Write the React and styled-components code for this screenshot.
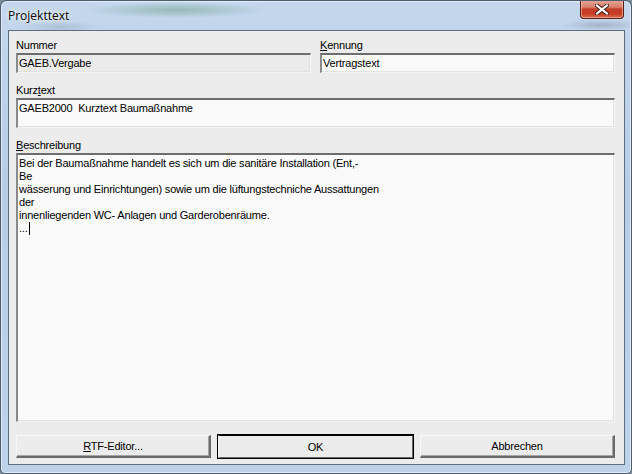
import React from 'react';
import styled, {createGlobalStyle} from 'styled-components';

const GlobalStyle = createGlobalStyle`
  html, body {
    margin: 0;
    padding: 0;
    background: #7a8a99;
  }
  #root {
    width: 632px;
    height: 474px;
  }
`;

const Window = styled.div`
  width: 632px;
  height: 474px;
  box-sizing: border-box;
  display: flex;
  flex-direction: column;
  border: 1px solid #4d5d6e;
  border-radius: 7px 7px 5px 5px;
  overflow: hidden;
  background:
    radial-gradient(ellipse 90px 8px at 175px 9px, rgba(96, 150, 120, 0.45), transparent),
    radial-gradient(ellipse 40px 6px at 600px 24px, rgba(110, 120, 140, 0.35), transparent),
    radial-gradient(ellipse 40px 6px at 60px 26px, rgba(120, 140, 170, 0.3), transparent),
    linear-gradient(180deg, #c4d7ec 0%, #b7cde6 40%, #bed3ea 100%);
  box-shadow: inset 0 0 0 1px rgba(255, 255, 255, 0.55);
`;

const TitleBar = styled.div`
  height: 29px;
  flex: none;
  display: flex;
  align-items: flex-start;
  justify-content: space-between;
  padding: 0 7px 0 7px;
`;

const Title = styled.span`
  margin-top: 8px;
  font-family: "Open Sans", "Noto Sans", sans-serif;
  font-size: 12px;
  line-height: 14px;
  color: #000;
  text-shadow: 0 0 6px rgba(255, 255, 255, 0.9), 0 0 3px rgba(255, 255, 255, 0.9);
`;

const CloseButton = styled.div`
  width: 44px;
  height: 19px;
  margin-top: -1px;
  box-sizing: border-box;
  border: 1px solid #5b1d14;
  border-top: none;
  border-radius: 0 0 4px 4px;
  display: flex;
  align-items: center;
  justify-content: center;
  background: linear-gradient(180deg, #e5a898 0%, #d8806c 40%, #c4402a 50%, #c73b22 75%, #d76b4d 100%);
  box-shadow: inset 0 0 0 1px rgba(255, 210, 200, 0.55);
`;

const Client = styled.div`
  flex: 1;
  margin: 0 6px 8px 7px;
  border: 1px solid #5f6d7c;
  background-color: #ececec;
  display: flex;
  flex-direction: column;
  padding: 7px 9px 6px 7px;
  font-family: "Liberation Sans", Arial, sans-serif;
  font-size: 11px;
  letter-spacing: -0.2px;
  color: #000;
`;

const TopRow = styled.div`
  display: grid;
  grid-template-columns: 295px 295px;
  column-gap: 9px;
`;

const Field = styled.div`
  display: flex;
  flex-direction: column;
  margin-bottom: ${p => p.$gap || 0}px;
  flex: ${p => (p.$grow ? 1 : 'none')};
`;

const Label = styled.div`
  height: 13px;
  line-height: 13px;
  margin-top: 1px;
  margin-bottom: 1px;
  white-space: nowrap;
  u {
    text-decoration: underline;
    text-underline-offset: 1px;
  }
`;

const Sunken = styled.div`
  box-sizing: border-box;
  height: ${p => p.$h}px;
  flex: ${p => (p.$grow ? 1 : 'none')};
  border-style: solid;
  border-width: 2px 1px 1px 2px;
  border-color: #6d6d6d #f4f4f4 #f4f4f4 #8a8a8a;
  box-shadow: inset -1px -1px 0 #e2e2e2;
  background: ${p => (p.$readOnly ? '#ebebeb' : '#fafafa')};
  padding: 2px 2px 0 1px;
  line-height: 13px;
  white-space: pre;
  overflow: hidden;
`;

const Caret = styled.span`
  display: inline-block;
  width: 1px;
  height: 13px;
  background: #000;
  vertical-align: top;
  margin-left: 1px;
`;

const ButtonRow = styled.div`
  display: grid;
  grid-template-columns: repeat(3, 195px);
  column-gap: 7px;
  margin-top: 13px;
`;

const Button = styled.div`
  box-sizing: border-box;
  height: 23px;
  display: flex;
  align-items: center;
  justify-content: center;
  background: #ececec;
  border-style: solid;
  border-width: 1px 2px 2px 1px;
  border-color: #f8f8f8 #6a6a6a #6a6a6a #f8f8f8;
  box-shadow: inset -1px -1px 0 #a5a5a5;
  ${p => p.$default && `
    outline: 1px solid #000;
    outline-offset: 0;
    border-width: 1px 1px 1px 1px;
    border-color: #000 #6a6a6a #6a6a6a #f8f8f8;
    box-shadow: inset 0 0 0 0 transparent;
  `}
  u {
    text-decoration: underline;
    text-underline-offset: 1px;
  }
`;

const description = `Bei der Baumaßnahme handelt es sich um die sanitäre Installation (Ent,-
Be
wässerung und Einrichtungen) sowie um die lüftungstechniche Aussattungen
der
innenliegenden WC- Anlagen und Garderobenräume.
...`;

const App = () => {
  return (
    <>
      <GlobalStyle />
      <Window>
        <TitleBar>
          <Title>Projekttext</Title>
          <CloseButton>
            <svg width="14" height="11" viewBox="0 0 14 11">
              <path d="M2 1.5 L12 9.5 M12 1.5 L2 9.5" stroke="#3d1a14" strokeWidth="4" strokeLinecap="square" />
              <path d="M2 1.5 L12 9.5 M12 1.5 L2 9.5" stroke="#fff" strokeWidth="2.2" strokeLinecap="square" />
            </svg>
          </CloseButton>
        </TitleBar>
        <Client>
          <TopRow>
            <Field $gap={10}>
              <Label>Nummer</Label>
              <Sunken $h={20} $readOnly>GAEB.Vergabe</Sunken>
            </Field>
            <Field $gap={10}>
              <Label><u>K</u>ennung</Label>
              <Sunken $h={20}>Vertragstext</Sunken>
            </Field>
          </TopRow>
          <Field $gap={10}>
            <Label>Kurz<u>t</u>ext</Label>
            <Sunken $h={30}>GAEB2000  Kurztext Baumaßnahme</Sunken>
          </Field>
          <Field $grow>
            <Label><u>B</u>eschreibung</Label>
            <Sunken $grow>
              {description}
              <Caret />
            </Sunken>
          </Field>
          <ButtonRow>
            <Button><span><u>R</u>TF-Editor...</span></Button>
            <Button $default>OK</Button>
            <Button>Abbrechen</Button>
          </ButtonRow>
        </Client>
      </Window>
    </>
  );
};

export default App;
